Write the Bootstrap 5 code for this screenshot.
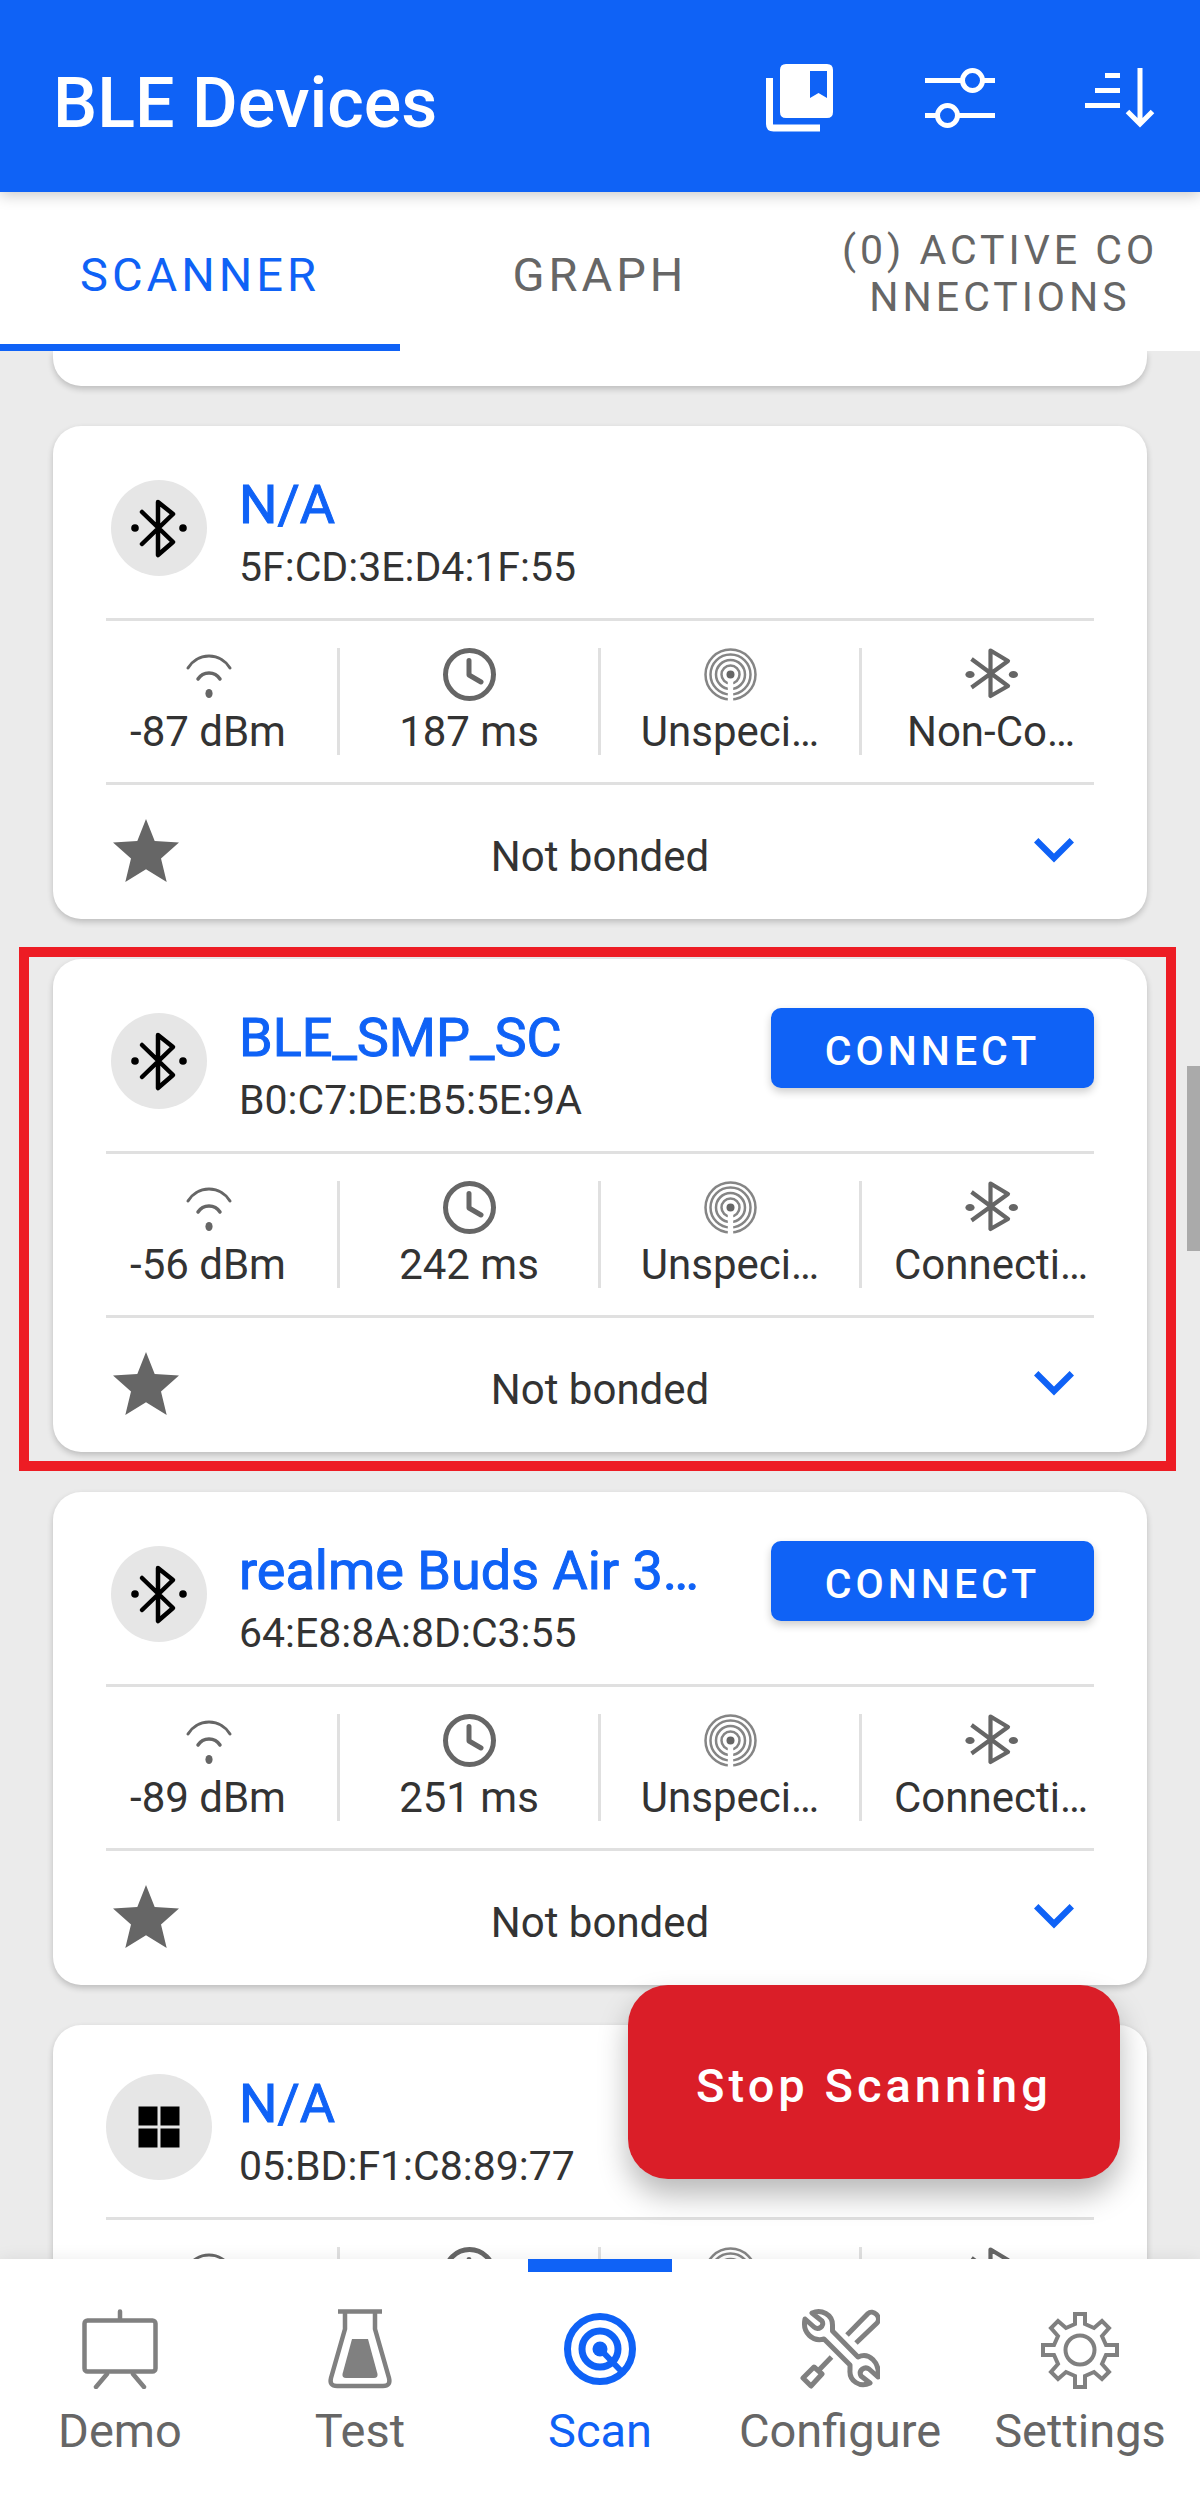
<!DOCTYPE html>
<html lang="en">
<head>
<meta charset="utf-8">
<meta name="viewport" content="width=device-width, initial-scale=1">
<title>BLE Devices</title>
<link href="https://cdn.jsdelivr.net/npm/bootstrap@5.3.0/dist/css/bootstrap.min.css" rel="stylesheet">
<style>
:root { --brand: #0f62f6; --grey: #666; --ink: #333; --line: #e0e0e0; }
body { font-family: Roboto, "Liberation Sans", sans-serif; background: #ebebeb; color: var(--ink); }
svg { display: block; flex-shrink: 0; }
.app-header { background: var(--brand); min-height: 192px; padding: 4px 0 0 53px; box-shadow: 0 3px 14px rgba(0,0,0,.22); z-index: 2; }
.app-title { font-size: 70px; line-height: 80px; font-weight: 500; padding-top: 10px; }
.bar-btn { width: 160px; height: 120px; color: #fff; }
.tabs { background: #fff; z-index: 1; }
.tab-link { height: 159px; padding-top: 12px; font-size: 47px; line-height: 47px; letter-spacing: 4px; color: var(--grey); border: 0; border-bottom: 7px solid transparent; text-decoration: none; }
.tab-link.active { color: var(--brand); border-color: var(--brand); }
.tab-small { font-size: 41px; }
.list-area { min-height: 0; }
.device-list { padding: 0 53px; gap: 40px; }
.device { background: #fff; border-radius: 28px; box-shadow: 0 3px 6px rgba(0,0,0,.2); flex-shrink: 0; }
.device-tail { height: 35px; border-radius: 0 0 28px 28px; }
.device-head { margin: 0 53px; padding: 49px 0 19px; gap: 27px; border-bottom: 3px solid var(--line); }
.avatar { width: 106px; height: 106px; }
.device-name { font-size: 54px; line-height: 60px; font-weight: 400; color: var(--brand); -webkit-text-stroke: 1px var(--brand); }
.device-mac { font-size: 41px; line-height: 64px; }
.btn-connect { width: 323px; height: 80px; padding: 6px 0 0; border-radius: 10px; background: var(--brand); color: #fff; font-size: 41px; line-height: 60px; font-weight: 500; letter-spacing: 4px; box-shadow: 0 4px 8px rgba(0,0,0,.2); }
.stats { padding: 27px 24px 27px 26px; }
.stat { flex: 1 1 0; border-right: 3px solid var(--line); font-size: 42px; line-height: 46px; gap: 8px; color: var(--grey); }
.stat:last-child { border-color: transparent; }
.stat span { color: var(--ink); white-space: nowrap; }
.device-foot { margin: 0 53px; border-top: 3px solid var(--line); font-size: 42px; }
.device-foot span { padding-top: 8px; }
.foot-btn { width: 80px; height: 134px; color: var(--grey); }
.foot-btn svg { margin-bottom: 4px; }
.foot-btn.toggle { color: var(--brand); }
.marker { top: -12px; right: -29px; bottom: -19px; left: -34px; border: 10px solid #ed1c24; pointer-events: none; }
.thumb { top: 715px; right: 0; width: 13px; height: 185px; background: #aaa; }
.fab { right: 80px; bottom: 80px; width: 492px; height: 194px; padding: 8px 0 0; border-radius: 40px; background: #da1e28; color: #fff; font-size: 47px; font-weight: 500; letter-spacing: 4px; box-shadow: 0 16px 30px rgba(0,0,0,.28); }
.fab:hover, .btn-connect:hover { background: #0b4fc8; color: #fff; }
.bottom-nav { background: #fff; z-index: 1; box-shadow: 0 0 16px rgba(0,0,0,.08); }
.nav-tab { flex: 1 1 0; height: 246px; padding-top: 50px; gap: 12px; font-size: 47px; line-height: 60px; color: var(--grey); text-decoration: none; }
.nav-tab svg { color: #808080; }
.nav-tab.active, .nav-tab.active svg { color: var(--brand); }
.nav-tab.active::before { content: ""; position: absolute; top: 0; width: 144px; height: 13px; background: var(--brand); }
</style>
</head>
<body>
<svg class="d-none" aria-hidden="true">
  <symbol id="i-bt-round" viewBox="-5 -5 106 106"><circle cx="48" cy="48" r="48" fill="#e6e6e6"/><path d="M31 32 62 62 47 75V22L62 34 31 64" fill="none" stroke="#000" stroke-width="4.5" stroke-linecap="round" stroke-linejoin="round"/><circle cx="24" cy="48" r="3.8"/><circle cx="72" cy="48" r="3.8"/></symbol>
  <symbol id="i-windows" viewBox="0 0 106 106"><circle cx="53" cy="53" r="53" fill="#e6e6e6"/><path d="M32.5 32.5h19v19h-19zM54.5 32.5h19v19h-19zM32.5 54.5h19v19h-19zM54.5 54.5h19v19h-19z"/></symbol>
  <symbol id="i-wifi" viewBox="0 0 53 53"><g fill="none" stroke="currentColor" stroke-linecap="round"><path d="M6 20A24.4 24.4 0 0 1 48 20" stroke-width="3"/><path d="M16 31A13 13 0 0 1 38 31" stroke-width="3.5"/></g><ellipse cx="27" cy="45.5" rx="3.6" ry="4.6" fill="currentColor"/></symbol>
  <symbol id="i-clock" viewBox="0 0 53 53"><g fill="none" stroke="currentColor" stroke-width="5" stroke-linecap="round" stroke-linejoin="round"><circle cx="26.5" cy="26.5" r="24"/><path d="M26 12.500V27L38 34"/></g></symbol>
  <symbol id="i-target" viewBox="0 0 53 53"><g fill="none" stroke="#858585" stroke-width="2.500"><circle cx="26.5" cy="26.5" r="25"/><circle cx="26.5" cy="26.5" r="20"/><circle cx="26.5" cy="26.5" r="14.500"/><circle cx="26.5" cy="26.5" r="9"/></g><path d="M23.800 33h5.400v20h-5.400z" fill="#fff"/><circle cx="26.500" cy="26.500" r="4" fill="currentColor"/></symbol>
  <symbol id="i-bt" viewBox="0 0 53 53"><path d="M6.500 11 43 38 25.500 48V2.500L43 13 6.500 39.500" fill="none" stroke="currentColor" stroke-width="4.200" stroke-linejoin="round"/><ellipse cx="5" cy="26.500" rx="4.600" ry="3.600" fill="currentColor"/><ellipse cx="48.400" cy="26.500" rx="4.600" ry="3.600" fill="currentColor"/></symbol>
  <symbol id="i-star" viewBox="0 0 66 63"><path d="M33 0 41.700 22 66 23.500 48 39.500 53.700 63 33 50.300 12.300 63 18 39.500 0 23.500 24.300 22z" fill="currentColor"/></symbol>
  <symbol id="i-chevron" viewBox="0 0 40 25"><path d="M2.200 2.200 20 20 37.800 2.200" fill="none" stroke="currentColor" stroke-width="6.200"/></symbol>
</svg>

<div class="vh-100 d-flex flex-column overflow-hidden">
  <header class="app-header position-relative d-flex align-items-center flex-shrink-0">
    <h1 class="app-title text-white mb-0 flex-grow-1">BLE Devices</h1>
    <button class="bar-btn btn p-0 border-0 d-flex align-items-center justify-content-center" aria-label="Saved mappings">
      <svg width="68" height="68" viewBox="0 0 68 68"><path d="M3.500 14V60Q3.500 64 7.500 64H54" fill="none" stroke="#fff" stroke-width="7"/><path fill="#fff" fill-rule="evenodd" d="M20 0H61Q67 0 67 6V48Q67 54 61 54H20Q14 54 14 48V6Q14 0 20 0zM44 7V34L52.500 29 61 34V7z"/></svg>
    </button>
    <button class="bar-btn btn p-0 border-0 d-flex align-items-center justify-content-center" aria-label="Filter">
      <svg width="70" height="68" viewBox="0 0 70 68" fill="none" stroke="#fff" stroke-width="5"><path d="M0 16.500H37M58 16.500H70M0 51.500H12M33 51.500H70"/><circle cx="47.500" cy="16.500" r="10"/><circle cx="22.500" cy="51.500" r="10"/></svg>
    </button>
    <button class="bar-btn btn p-0 border-0 d-flex align-items-center justify-content-center" aria-label="Sort">
      <svg width="70" height="68" viewBox="0 0 70 68" fill="none" stroke="#fff" stroke-width="5"><path d="M20 11.500H35M10 26.500H35M0 41.500H35M55 4V60M42.500 47.500 55 60 67.500 47.500"/></svg>
    </button>
  </header>

  <nav class="tabs row g-0 flex-shrink-0 position-relative" aria-label="Views">
    <a href="#" class="tab-link active col-4 d-flex align-items-center justify-content-center" aria-current="page">SCANNER</a>
    <a href="#" class="tab-link col-4 d-flex align-items-center justify-content-center">GRAPH</a>
    <a href="#" class="tab-link tab-small col-4 d-flex align-items-center justify-content-center text-center">(0) ACTIVE CO<br>NNECTIONS</a>
  </nav>

  <main class="list-area position-relative flex-grow-1 overflow-hidden">
    <div class="device-list d-flex flex-column">
      <div class="device device-tail"></div>

      <article class="device">
        <div class="device-head d-flex align-items-start">
          <svg class="avatar"><use href="#i-bt-round"/></svg>
          <div class="flex-grow-1"><h2 class="device-name mb-0">N/A</h2><div class="device-mac">5F:CD:3E:D4:1F:55</div></div>
        </div>
        <div class="stats d-flex">
          <div class="stat d-flex flex-column align-items-center"><svg width="53" height="53"><use href="#i-wifi"/></svg><span>-87 dBm</span></div>
          <div class="stat d-flex flex-column align-items-center"><svg width="53" height="53"><use href="#i-clock"/></svg><span>187 ms</span></div>
          <div class="stat d-flex flex-column align-items-center"><svg width="53" height="53"><use href="#i-target"/></svg><span>Unspeci…</span></div>
          <div class="stat d-flex flex-column align-items-center"><svg width="53" height="53"><use href="#i-bt"/></svg><span>Non-Co…</span></div>
        </div>
        <div class="device-foot d-flex align-items-center justify-content-between">
          <button class="foot-btn btn p-0 border-0 d-flex align-items-center justify-content-center" aria-label="Favorite"><svg width="66" height="63"><use href="#i-star"/></svg></button>
          <span>Not bonded</span>
          <button class="foot-btn toggle btn p-0 border-0 d-flex align-items-center justify-content-center" aria-label="Show details"><svg width="40" height="25"><use href="#i-chevron"/></svg></button>
        </div>
      </article>

      <article class="device position-relative">
        <div class="device-head d-flex align-items-start">
          <svg class="avatar"><use href="#i-bt-round"/></svg>
          <div class="flex-grow-1"><h2 class="device-name mb-0">BLE_SMP_SC</h2><div class="device-mac">B0:C7:DE:B5:5E:9A</div></div>
          <button class="btn btn-connect border-0">CONNECT</button>
        </div>
        <div class="stats d-flex">
          <div class="stat d-flex flex-column align-items-center"><svg width="53" height="53"><use href="#i-wifi"/></svg><span>-56 dBm</span></div>
          <div class="stat d-flex flex-column align-items-center"><svg width="53" height="53"><use href="#i-clock"/></svg><span>242 ms</span></div>
          <div class="stat d-flex flex-column align-items-center"><svg width="53" height="53"><use href="#i-target"/></svg><span>Unspeci…</span></div>
          <div class="stat d-flex flex-column align-items-center"><svg width="53" height="53"><use href="#i-bt"/></svg><span>Connecti…</span></div>
        </div>
        <div class="device-foot d-flex align-items-center justify-content-between">
          <button class="foot-btn btn p-0 border-0 d-flex align-items-center justify-content-center" aria-label="Favorite"><svg width="66" height="63"><use href="#i-star"/></svg></button>
          <span>Not bonded</span>
          <button class="foot-btn toggle btn p-0 border-0 d-flex align-items-center justify-content-center" aria-label="Show details"><svg width="40" height="25"><use href="#i-chevron"/></svg></button>
        </div>
        <div class="marker position-absolute"></div>
      </article>

      <article class="device">
        <div class="device-head d-flex align-items-start">
          <svg class="avatar"><use href="#i-bt-round"/></svg>
          <div class="flex-grow-1"><h2 class="device-name mb-0 text-nowrap">realme Buds Air 3…</h2><div class="device-mac">64:E8:8A:8D:C3:55</div></div>
          <button class="btn btn-connect border-0">CONNECT</button>
        </div>
        <div class="stats d-flex">
          <div class="stat d-flex flex-column align-items-center"><svg width="53" height="53"><use href="#i-wifi"/></svg><span>-89 dBm</span></div>
          <div class="stat d-flex flex-column align-items-center"><svg width="53" height="53"><use href="#i-clock"/></svg><span>251 ms</span></div>
          <div class="stat d-flex flex-column align-items-center"><svg width="53" height="53"><use href="#i-target"/></svg><span>Unspeci…</span></div>
          <div class="stat d-flex flex-column align-items-center"><svg width="53" height="53"><use href="#i-bt"/></svg><span>Connecti…</span></div>
        </div>
        <div class="device-foot d-flex align-items-center justify-content-between">
          <button class="foot-btn btn p-0 border-0 d-flex align-items-center justify-content-center" aria-label="Favorite"><svg width="66" height="63"><use href="#i-star"/></svg></button>
          <span>Not bonded</span>
          <button class="foot-btn toggle btn p-0 border-0 d-flex align-items-center justify-content-center" aria-label="Show details"><svg width="40" height="25"><use href="#i-chevron"/></svg></button>
        </div>
      </article>

      <article class="device">
        <div class="device-head d-flex align-items-start">
          <svg class="avatar"><use href="#i-windows"/></svg>
          <div class="flex-grow-1"><h2 class="device-name mb-0">N/A</h2><div class="device-mac">05:BD:F1:C8:89:77</div></div>
        </div>
        <div class="stats d-flex">
          <div class="stat d-flex flex-column align-items-center"><svg width="53" height="53"><use href="#i-wifi"/></svg></div>
          <div class="stat d-flex flex-column align-items-center"><svg width="53" height="53"><use href="#i-clock"/></svg></div>
          <div class="stat d-flex flex-column align-items-center"><svg width="53" height="53"><use href="#i-target"/></svg></div>
          <div class="stat d-flex flex-column align-items-center"><svg width="53" height="53"><use href="#i-bt"/></svg></div>
        </div>
      </article>
    </div>
    <div class="thumb position-absolute"></div>
    <button class="fab btn border-0 position-absolute">Stop Scanning</button>
  </main>

  <nav class="bottom-nav d-flex flex-shrink-0 position-relative" aria-label="Main">
    <a href="#" class="nav-tab d-flex flex-column align-items-center">
      <svg width="80" height="80" viewBox="0 0 80 80" fill="none" stroke="currentColor" stroke-width="4.500" stroke-linecap="round"><rect x="4.500" y="11.500" width="71" height="51" rx="3"/><path d="M40 2.500V10M27 65 16 78M53 65 64 78"/></svg>
      <span>Demo</span></a>
    <a href="#" class="nav-tab d-flex flex-column align-items-center">
      <svg width="80" height="80" viewBox="0 0 80 80" fill="none" stroke="currentColor" stroke-width="4.500"><path d="M18 2.500H62M25 4V20L11 69Q9 77 17 77H63Q71 77 69 69L55 20V4"/><path d="M32 30H48L57.500 65Q58 69 54 69H26Q22 69 22.500 65z" fill="currentColor" stroke="none"/></svg>
      <span>Test</span></a>
    <a href="#" class="nav-tab active position-relative d-flex flex-column align-items-center" aria-current="page">
      <svg width="80" height="80" viewBox="0 0 80 80" fill="none" stroke="currentColor" stroke-width="7"><circle cx="40" cy="40" r="32.500"/><circle cx="40" cy="40" r="18"/><circle cx="40" cy="40" r="7.500" fill="currentColor" stroke="none"/><path d="M40 40 62 63" stroke-width="6"/></svg>
      <span>Scan</span></a>
    <a href="#" class="nav-tab d-flex flex-column align-items-center">
      <svg width="80" height="80" viewBox="0 0 80 80" fill="none" stroke="currentColor" stroke-width="5" stroke-linejoin="round"><path d="M12 4C21 0 33 5 32.500 17V22L58 48C69 43 80 53 78 68L69 60C65 57 58 61 61 67L70 74C60 79 49 72 50 61V56L24 30C13 33 2 24 5 10L14 18C18 22 25 17 22 12z"/><path d="M47 26 68 4.500C73 0 82 8 77 14L56 34M31.500 48 19 61M14 58 22 65 11 77 3 69z"/></svg>
      <span>Configure</span></a>
    <a href="#" class="nav-tab d-flex flex-column align-items-center">
      <svg width="80" height="80" viewBox="-40 -41 80 80" fill="none" stroke="currentColor" stroke-width="4"><circle r="14.500"/><path d="M5-36V-26L14-22 22-29 29-22 22-14 26-5H37V5H26L22 14 29 22 22 29 14 22 5 26V37H-5V26L-14 22-22 29-29 22-22 14-26 5H-37V-5H-26L-22-14-29-22-22-29-14-22-5-26V-36z"/></svg>
      <span>Settings</span></a>
  </nav>
</div>
<script src="https://cdn.jsdelivr.net/npm/bootstrap@5.3.0/dist/js/bootstrap.bundle.min.js"></script>
</body>
</html>
